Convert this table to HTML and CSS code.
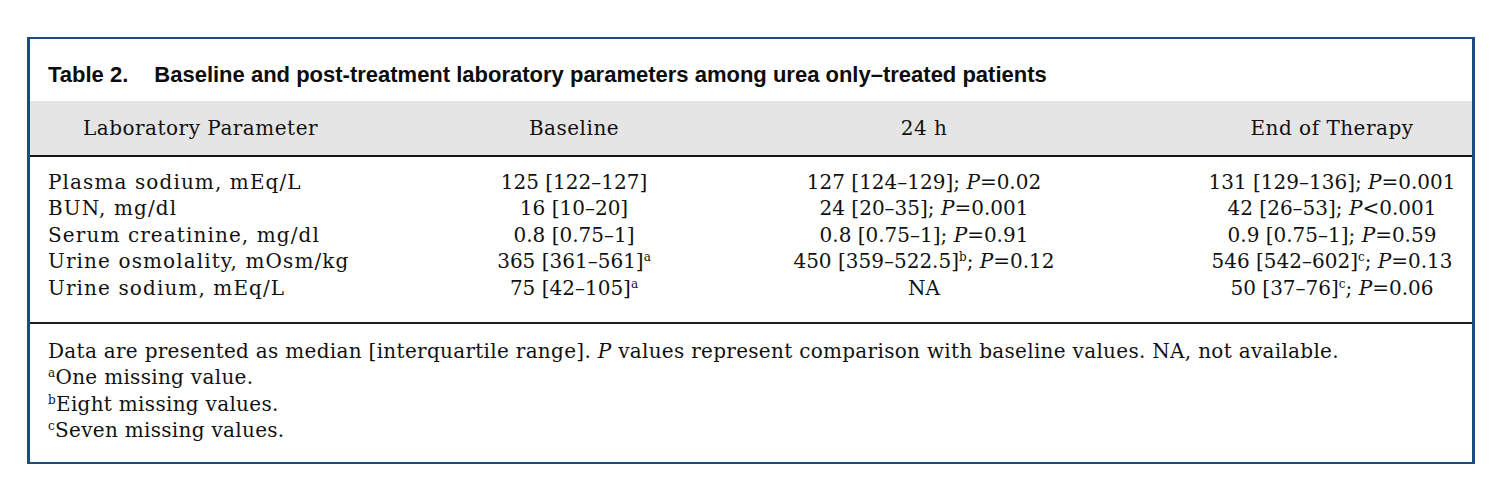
FILE: index.html
```html
<!DOCTYPE html>
<html lang="en">
<head>
<meta charset="utf-8">
<title>Table 2</title>
<link rel="stylesheet" href="styles.css">
</head>
<body>
<div class="frame">
  <div class="caption"><span class="label">Table 2.</span>Baseline and post-treatment laboratory parameters among urea only–treated patients</div>
  <table class="data">
    <colgroup>
      <col class="c1"><col class="c2"><col class="c3"><col class="c4">
    </colgroup>
    <thead>
      <tr>
        <th class="first hd1">Laboratory Parameter</th>
        <th>Baseline</th>
        <th>24 h</th>
        <th class="last">End of Therapy</th>
      </tr>
    </thead>
    <tbody>
      <tr class="r1">
        <td class="first">Plasma sodium, mEq/L</td>
        <td>125 [122–127]</td>
        <td>127 [124–129]; <i>P</i>=0.02</td>
        <td class="last">131 [129–136]; <i>P</i>=0.001</td>
      </tr>
      <tr>
        <td class="first">BUN, mg/dl</td>
        <td>16 [10–20]</td>
        <td>24 [20–35]; <i>P</i>=0.001</td>
        <td class="last">42 [26–53]; <i>P</i>&lt;0.001</td>
      </tr>
      <tr>
        <td class="first">Serum creatinine, mg/dl</td>
        <td>0.8 [0.75–1]</td>
        <td>0.8 [0.75–1]; <i>P</i>=0.91</td>
        <td class="last">0.9 [0.75–1]; <i>P</i>=0.59</td>
      </tr>
      <tr>
        <td class="first">Urine osmolality, mOsm/kg</td>
        <td>365 [361–561]<sup>a</sup></td>
        <td>450 [359–522.5]<sup>b</sup>; <i>P</i>=0.12</td>
        <td class="last">546 [542–602]<sup>c</sup>; <i>P</i>=0.13</td>
      </tr>
      <tr class="rl">
        <td class="first">Urine sodium, mEq/L</td>
        <td>75 [42–105]<sup>a</sup></td>
        <td>NA</td>
        <td class="last">50 [37–76]<sup>c</sup>; <i>P</i>=0.06</td>
      </tr>
    </tbody>
  </table>
  <div class="notes">
    <p>Data are presented as median [interquartile range]. <i>P</i> values represent comparison with baseline values. NA, not available.</p>
    <p><sup>a</sup>One missing value.</p>
    <p><sup>b</sup>Eight missing values.</p>
    <p><sup>c</sup>Seven missing values.</p>
  </div>
</div>
</body>
</html>
```
FILE: styles.css
```css
html, body {
  margin: 0;
  padding: 0;
  background: #ffffff;
}

body {
  padding: 37px 0 0 27px;
  font-family: "DejaVu Serif", "Liberation Serif", serif;
  font-size: 20px;
  color: #111111;
}

.frame {
  width: 1442px;
  border-style: solid;
  border-color: #1c4a86;
  border-width: 2px 3px;
}

.caption {
  font-family: "Liberation Sans", "Arial", sans-serif;
  font-weight: bold;
  font-size: 22px;
  line-height: 24px;
  padding: 24px 0 14px 18px;
  color: #0d0d0d;
  white-space: nowrap;
}

.caption .label {
  margin-right: 26px;
}

.data {
  width: 1442px;
  table-layout: fixed;
  border-collapse: collapse;
  border-spacing: 0;
}

.c1 { width: 444px; }
.c2 { width: 200px; }
.c3 { width: 500px; }
.c4 { width: 298px; }

.data th,
.data td {
  padding: 0;
  text-align: center;
  white-space: nowrap;
  line-height: 26.4px;
  font-weight: normal;
}

.data th {
  background: #e5e5e5;
  padding-top: 14px;
  padding-bottom: 14px;
  line-height: 26px;
  letter-spacing: 0.5px;
  border-bottom: 2px solid #151515;
}

.data td.first {
  letter-spacing: 1.1px;
}

.data .first {
  text-align: left;
  padding-left: 18px;
}

.data .hd1 {
  padding-left: 53px;
}

.data .last {
  padding-left: 34px;
  padding-right: 16px;
}

.data .r1 td {
  padding-top: 12px;
}

.data .rl td {
  padding-bottom: 21px;
}

sup {
  font-size: 12px;
  line-height: 0;
  vertical-align: 7px;
}

.notes {
  border-top: 2px solid #1e1e1e;
  padding: 14px 0 18px 18px;
  letter-spacing: 0.3px;
}

.notes p {
  margin: 0;
  line-height: 26.4px;
}
```
